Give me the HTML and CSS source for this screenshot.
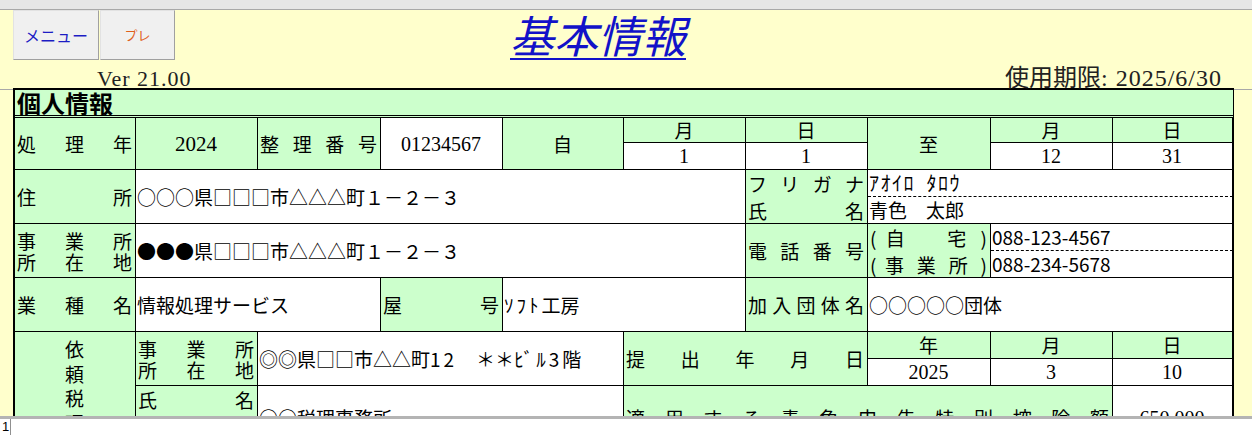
FILE: index.html
```html
<!DOCTYPE html>
<html lang="ja">
<head>
<meta charset="utf-8">
<title>基本情報</title>
<link rel="stylesheet" href="styles.css">
</head>
<body>
<div class="topbar"></div>
<header class="head">
  <div class="head-top">
    <div class="btns">
      <button class="btn btn-menu">メニュー</button>
      <button class="btn btn-pre">プレ</button>
    </div>
    <h1 class="title">基本情報</h1>
  </div>
  <div class="head-sub">
    <span class="ver">Ver 21.00</span>
    <span class="limit">使用期限<span class="d">: 2025/6/30</span></span>
  </div>
</header>
<main class="sheet">
  <section class="form">
    <div class="form-title">個人情報</div>
    <div class="grid">
      <div class="c g j r2">処 理 年</div>
      <div class="c g m n r2 yr">2024</div>
      <div class="c g j r2">整 理 番 号</div>
      <div class="c m n r2">01234567</div>
      <div class="c g m r2">自</div>
      <div class="c g m">月</div>
      <div class="c g m">日</div>
      <div class="c g m r2">至</div>
      <div class="c g m">月</div>
      <div class="c g m">日</div>
      <div class="c m n">1</div>
      <div class="c m n">1</div>
      <div class="c m n">12</div>
      <div class="c m n">31</div>

      <div class="c g j r2">住 所</div>
      <div class="c v s5 r2">○○○県□□□市△△△町１－２－３</div>
      <div class="c g j r2 l27"><span>フ リ ガ ナ<br>氏 名</span></div>
      <div class="c v s3 dash kana">ｱｵｲﾛ&ensp;ﾀﾛｳ</div>
      <div class="c v s3">青色　太郎</div>

      <div class="c g j r2 l20"><span>事 業 所<br>所 在 地</span></div>
      <div class="c v s5 r2">●●●県□□□市△△△町１－２－３</div>
      <div class="c g j r2">電 話 番 号</div>
      <div class="c g j r2 l27"><span>( 自 <i class="gap"></i> 宅 )<br>( 事 業 所 )</span></div>
      <div class="c v s2 dash">088-123-4567</div>
      <div class="c v s2">088-234-5678</div>

      <div class="c g j">業 種 名</div>
      <div class="c v s2">情報処理サービス</div>
      <div class="c g j">屋 号</div>
      <div class="c v s2"><span><span class="hk">ｿﾌﾄ</span>工房</span></div>
      <div class="c g j">加 入 団 体 名</div>
      <div class="c v s3">○○○○○団体</div>

      <div class="c g m r3 vert"><span>依<br>頼<br>税<br>理<br>士</span></div>
      <div class="c g j r2 l20"><span>事 業 所<br>所 在 地</span></div>
      <div class="c v s3 r2"><span>◎◎県□□市△△町<span class="hk">12</span>　＊＊<span class="hk">ﾋﾞﾙ3</span>階</span></div>
      <div class="c g j s2 r2">提 出 年 月 日</div>
      <div class="c g m">年</div>
      <div class="c g m">月</div>
      <div class="c g m">日</div>
      <div class="c m n">2025</div>
      <div class="c m n">3</div>
      <div class="c m n">10</div>

      <div class="c g j top">氏 名</div>
      <div class="c v s3">○○税理事務所</div>
      <div class="c g j s4">適 用 す る 青 色 申 告 特 別 控 除 額</div>
      <div class="c m n">650,000</div>
    </div>
  </section>
</main>
<footer class="statusbar"><div class="rownum">1</div></footer>
</body>
</html>
```

FILE: styles.css
```css
* { box-sizing: border-box; }
html, body { margin: 0; padding: 0; }
body {
  width: 1252px;
  height: 435px;
  overflow: hidden;
  background: #ffffcc;
  font-family: "Noto Sans CJK JP", sans-serif;
  color: #000;
}
.topbar {
  height: 10px;
  background: #e6e6e6;
  border-bottom: 1px solid #a8a8a8;
}
.head { height: 78px; }
.head-top {
  height: 50px;
  display: flex;
  align-items: flex-start;
}
.btns {
  display: flex;
  gap: 1px;
  margin-left: 13px;
}
.btn {
  height: 50px;
  padding: 0;
  background: #f0f0f0;
  border: 1px solid;
  border-color: #e2e2e2 #a0a0a0 #a0a0a0 #e2e2e2;
  font-family: "Noto Sans CJK JP", sans-serif;
  font-size: 16px;
  line-height: 20px;
}
.btn-menu { width: 86px; color: #1c1cc4; }
.btn-pre { width: 75px; color: #e0601c; font-size: 13px; }
.title {
  margin: 0 0 0 335px;
  font-size: 44px;
  font-weight: 400;
  font-style: italic;
  line-height: 48px;
  color: #1212c8;
  text-decoration: underline;
  text-decoration-thickness: 2px;
  text-underline-offset: 5px;
}
.head-sub {
  height: 28px;
  display: flex;
  justify-content: space-between;
  align-items: flex-end;
  padding: 0 30px 0 97px;
  font-family: "Liberation Serif", "Noto Sans CJK JP", serif;
  color: #222;
}
.ver { font-size: 22px; line-height: 22px; letter-spacing: 1px; margin-bottom: -2px; }
.limit { font-size: 24px; line-height: 24px; margin-bottom: -2px; }
.limit .d { letter-spacing: 1px; }

.sheet {
  height: 328px;
  overflow: hidden;
  background: linear-gradient(#a8a8a8, #a8a8a8) 0 1px / 100% 1px no-repeat;
}
.form {
  width: 1221px;
  margin-left: 13px;
  border: solid #000;
  border-width: 2px 1px 0 2px;
}
.form-title {
  height: 28px;
  background: #ccffcc;
  border-bottom: 3px double #000;
  padding-left: 2px;
  font-size: 24px;
  font-weight: 700;
  line-height: 25px;
}
.grid {
  display: grid;
  grid-template-columns: 121px 122px 123px 122px 121px 122px 122px 123px 122px 120px;
  grid-template-rows: 25px 27px 27px 27px 27px 27px 54px 27px 27px 64px;
  font-size: 19px;
  line-height: 22px;
}
.c {
  display: grid;
  align-items: center;
  border-right: 1px solid #000;
  border-bottom: 1px solid #000;
  padding: 0 3px 0 2px;
  background: #fff;
}
.g { background: #ccffcc; }
.v { padding-left: 1px; white-space: nowrap; }
.j { text-align: justify; text-align-last: justify; }
.m { text-align: center; }
.n { font-family: "Liberation Serif", serif; font-size: 20px; }
.yr { font-size: 21px; }
.dash { border-bottom-style: dashed; }
.kana { font-size: 20px; letter-spacing: 1.5px; }
.hk { letter-spacing: 3px; }
.l27 { line-height: 27px; }
.l20 { line-height: 21px; }
.gap { display: inline-block; width: 19px; }
.vert { align-items: start; padding-top: 5px; line-height: 24.5px; overflow: hidden; }
.top { align-items: start; line-height: 27px; }
.s2 { grid-column: span 2; }
.s3 { grid-column: span 3; }
.s4 { grid-column: span 4; }
.s5 { grid-column: span 5; }
.r2 { grid-row: span 2; }
.r3 { grid-row: span 3; }

.statusbar {
  height: 19px;
  background: #fff;
  border-top: 3px solid #b4b4b4;
  display: flex;
}
.rownum {
  width: 11px;
  height: 100%;
  border-right: 1px solid #909090;
  overflow: hidden;
  font-family: "Liberation Sans", sans-serif;
  font-size: 13px;
  line-height: 16px;
  padding-left: 2px;
}
```
